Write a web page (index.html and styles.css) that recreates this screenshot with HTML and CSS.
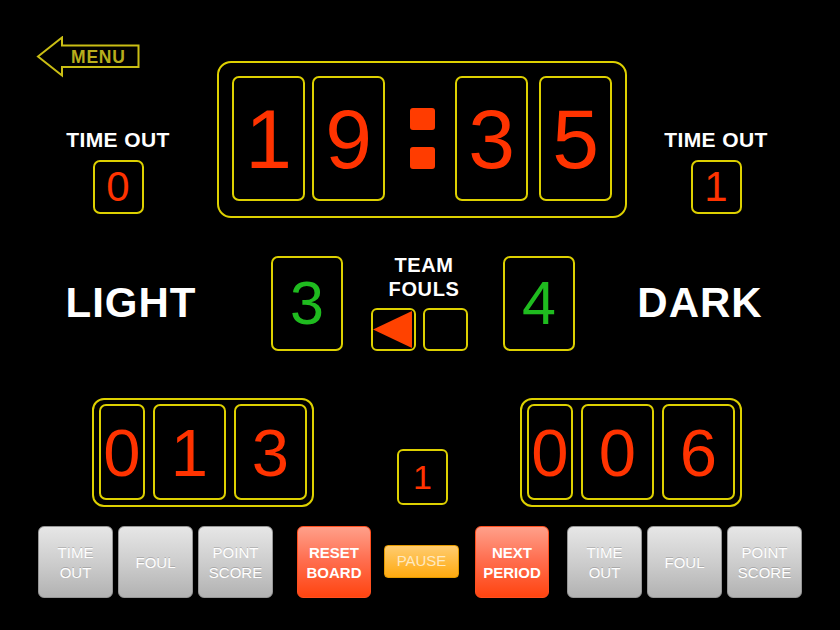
FILE: index.html
```html
<!DOCTYPE html>
<html>
<head>
<meta charset="utf-8">
<title>Scoreboard</title>
<link rel="stylesheet" href="styles.css">
</head>
<body>
<div class="board">
  <section class="top">
    <div class="side side-left">
      <svg class="menu" width="106" height="42" viewBox="36 36 106 42">
        <path d="M38 56.5 L62 37.5 L62 45.5 L138.5 45.5 L138.5 67 L62 67 L62 75.5 Z" fill="none" stroke="#cabe14" stroke-width="2"/>
        <text class="menu-text" x="71" y="63">MENU</text>
      </svg>
      <div class="timeout">
        <div class="label">TIME OUT</div>
        <div class="box tbox"><span class="red">0</span></div>
      </div>
    </div>
    <div class="clock">
      <div class="box cbox first"><span class="red">1</span></div>
      <div class="box cbox"><span class="red">9</span></div>
      <div class="colon"><i></i><i></i></div>
      <div class="box cbox"><span class="red">3</span></div>
      <div class="box cbox last"><span class="red">5</span></div>
    </div>
    <div class="side side-right">
      <div class="timeout">
        <div class="label">TIME OUT</div>
        <div class="box tbox"><span class="red">1</span></div>
      </div>
    </div>
  </section>

  <section class="mid">
    <div class="team team-left">LIGHT</div>
    <div class="box fbox"><span class="green">3</span></div>
    <div class="fouls">
      <div class="flabel">TEAM<br>FOULS</div>
      <div class="fboxes">
        <div class="box arrow">
          <svg width="41" height="39" viewBox="0 0 41 39"><polygon points="0,19.5 39,1 39,38" fill="#ff4200"/></svg>
        </div>
        <div class="box arrow"></div>
      </div>
    </div>
    <div class="box fbox"><span class="green">4</span></div>
    <div class="team team-right">DARK</div>
  </section>

  <section class="scores">
    <div class="score">
      <div class="box sbox narrow"><span class="red">0</span></div>
      <div class="box sbox"><span class="red">1</span></div>
      <div class="box sbox"><span class="red">3</span></div>
    </div>
    <div class="box pbox"><span class="red">1</span></div>
    <div class="score score-right">
      <div class="box sbox narrow"><span class="red">0</span></div>
      <div class="box sbox"><span class="red">0</span></div>
      <div class="box sbox"><span class="red">6</span></div>
    </div>
  </section>

  <section class="buttons">
    <div class="group">
      <div class="btn gray">TIME<br>OUT</div>
      <div class="btn gray">FOUL</div>
      <div class="btn gray">POINT<br>SCORE</div>
    </div>
    <div class="btn red-btn reset">RESET<br>BOARD</div>
    <div class="btn pause">PAUSE</div>
    <div class="btn red-btn next">NEXT<br>PERIOD</div>
    <div class="group group-right">
      <div class="btn gray">TIME<br>OUT</div>
      <div class="btn gray">FOUL</div>
      <div class="btn gray">POINT<br>SCORE</div>
    </div>
  </section>
</div>
</body>
</html>
```

FILE: styles.css
```css
* { box-sizing: border-box; }
html, body {
  margin: 0;
  padding: 0;
  background: #000;
}
body {
  font-family: "Liberation Sans", Arial, Helvetica, sans-serif;
  color: #fff;
}
.board {
  width: 840px;
  height: 630px;
  overflow: hidden;
  background: #000;
}

/* generic yellow box */
.box {
  border: 2px solid #ddd000;
  border-radius: 7px;
  display: flex;
  align-items: center;
  justify-content: center;
  flex-shrink: 0;
}
.red { color: #ff3300; line-height: 1; }
.green { color: #1fbb1f; line-height: 1; }

/* ---------- top ---------- */
.top {
  display: grid;
  grid-template-columns: 217px 410px 213px;
  height: 218px;
}
.menu {
  display: block;
  margin: 36px 0 0 36px;
}
.menu-text {
  font-family: "Liberation Sans", Arial, sans-serif;
  font-weight: bold;
  font-size: 17.5px;
  letter-spacing: 0.8px;
  fill: #b8ad1c;
}
.timeout {
  width: 104px;
  text-align: center;
}
.side-left .timeout {
  margin: 50px 0 0 66px;
}
.side-right .timeout {
  margin: 128px 0 0 37px;
}
.label {
  font-weight: bold;
  font-size: 21px;
  line-height: 24px;
  letter-spacing: 0.4px;
  white-space: nowrap;
}
.tbox {
  width: 51px;
  height: 54px;
  margin: 8px auto 0;
  font-size: 42px;
}

.clock {
  margin-top: 61px;
  height: 157px;
  border: 2px solid #ddd000;
  border-radius: 14px;
  padding: 13px 13px 15px 13px;
  display: flex;
}
.cbox {
  width: 73px;
  height: 125px;
  font-size: 84px;
}
.cbox.first { margin-right: 7px; }
.cbox.last { margin-left: 11px; }
.colon {
  width: 70px;
  flex-shrink: 0;
  display: flex;
  flex-direction: column;
  align-items: center;
  justify-content: center;
  gap: 17px;
  padding-left: 5px;
}
.colon i {
  display: block;
  width: 25px;
  height: 22px;
  border-radius: 3px;
  background: #ff3c00;
}

/* ---------- middle ---------- */
.mid {
  margin-top: 35px;
  height: 98px;
  display: flex;
  align-items: flex-end;
}
.team {
  align-self: center;
  font-weight: bold;
  font-size: 42px;
  line-height: 42px;
  letter-spacing: 1px;
  text-align: center;
}
.team-left { width: 262px; margin-right: 9px; padding-top: 2px; }
.team-right { width: 250px; padding-top: 2px; }
.fbox {
  width: 72px;
  height: 95px;
  font-size: 61px;
}
.fouls {
  width: 160px;
  display: flex;
  flex-direction: column;
  align-items: center;
}
.flabel {
  font-weight: bold;
  font-size: 20px;
  line-height: 24px;
  letter-spacing: 0.6px;
  text-align: center;
  padding-left: 2px;
}
.fboxes {
  display: flex;
  gap: 7px;
  margin-top: 7px;
  margin-left: -8px;
}
.arrow {
  width: 45px;
  height: 43px;
  border-radius: 6px;
  padding: 0;
}
.arrow svg { display: block; }

/* ---------- scores ---------- */
.scores {
  margin-top: 47px;
  height: 109px;
  display: flex;
  align-items: flex-end;
  padding-left: 92px;
}
.score {
  width: 222px;
  height: 109px;
  border: 2px solid #ddd000;
  border-radius: 12px;
  padding: 4px 5px 5px 5px;
  display: flex;
  gap: 8px;
  flex-shrink: 0;
}
.sbox {
  width: 73px;
  height: 96px;
  font-size: 67px;
}
.sbox.narrow { width: 46px; }
.pbox {
  width: 51px;
  height: 56px;
  margin: 0 72px 2px 83px;
  font-size: 34px;
  border-radius: 6px;
}

/* ---------- buttons ---------- */
.buttons {
  margin-top: 19px;
  height: 72px;
  display: flex;
  align-items: center;
  padding-left: 38px;
}
.group { display: flex; gap: 5px; }
.btn {
  width: 75px;
  height: 72px;
  border-radius: 6px;
  display: flex;
  align-items: center;
  justify-content: center;
  text-align: center;
  font-size: 15px;
  line-height: 20px;
  color: #fff;
  flex-shrink: 0;
}
.gray {
  background: linear-gradient(#e6e6e6, #cbcbcb 55%, #b2b2b2);
  border: 1px solid #969696;
  text-shadow: 0 -1px 0 rgba(0,0,0,0.18);
  padding-top: 1px;
}
.red-btn {
  width: 74px;
  font-weight: bold;
  background: linear-gradient(#ffa08a, #ff7052 45%, #ff4410);
  border: 1px solid #ff5020;
  padding-top: 2px;
}
.reset { margin-left: 24px; }
.next { margin-left: 16px; }
.pause {
  width: 75px;
  height: 33px;
  margin-left: 13px;
  margin-top: -2px;
  border-radius: 4px;
  background: linear-gradient(#ffcc70, #ffaa10);
  border: 1px solid #e49a00;
  color: #ffe9c0;
}
.group-right { margin-left: 18px; }
```
